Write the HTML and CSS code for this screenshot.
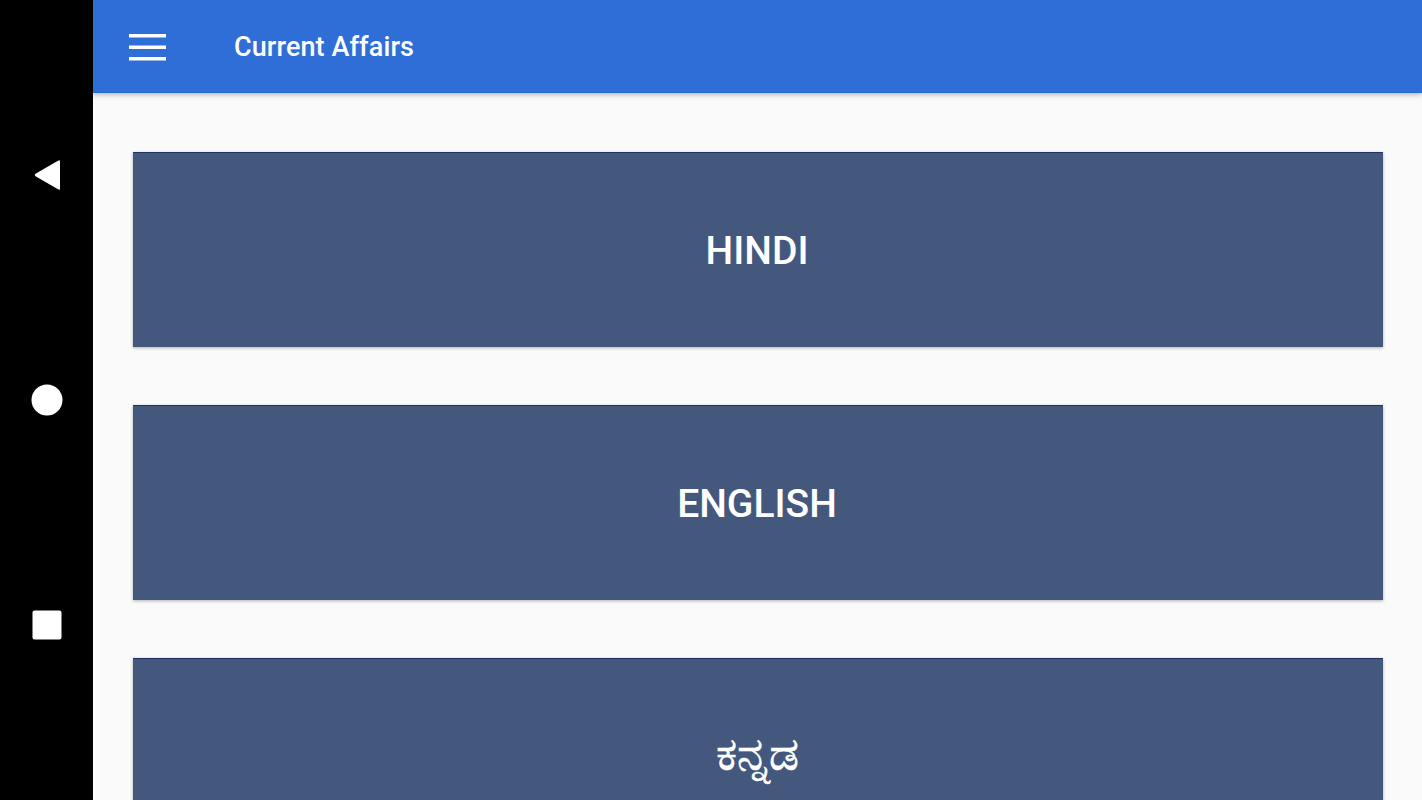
FILE: index.html
```html
<!DOCTYPE html>
<html>
<head>
<meta charset="utf-8">
<link rel="stylesheet" href="styles.css">
</head>
<body>
<div class="screen">
  <nav class="navbar">
    <svg class="nav-icon" width="30" height="32" viewBox="0 0 30 32"><path d="M27 2.5 L27 29.5 Q27 31.5 25 30.3 L2.5 17.3 Q0.8 16 2.5 14.7 L25 1.7 Q27 0.5 27 2.5 Z" fill="#fff"/></svg>
    <svg class="nav-icon" width="32" height="32" viewBox="0 0 32 32"><circle cx="16" cy="16" r="15.5" fill="#fff"/></svg>
    <svg class="nav-icon" width="30" height="30" viewBox="0 0 30 30"><rect x="0.5" y="0.5" width="29" height="29" rx="2" fill="#fff"/></svg>
  </nav>
  <main class="app">
    <header class="appbar">
      <svg class="menu" width="37" height="27" viewBox="0 0 37 27"><rect x="0" y="0" width="37" height="3.5" fill="#fff"/><rect x="0" y="11.5" width="37" height="3.5" fill="#fff"/><rect x="0" y="23" width="37" height="3.5" fill="#fff"/></svg>
      <h1 class="title">Current Affairs</h1>
    </header>
    <section class="list">
      <div class="card">HINDI</div>
      <div class="card">ENGLISH</div>
      <div class="card kn">ಕನ್ನಡ</div>
    </section>
  </main>
</div>
</body>
</html>
```
FILE: styles.css
```css
html, body {
  margin: 0;
  padding: 0;
  width: 1422px;
  height: 800px;
  overflow: hidden;
  font-family: Roboto, "Noto Sans", "Liberation Sans", sans-serif;
}
.screen {
  display: flex;
  width: 1422px;
  height: 800px;
}
.navbar {
  width: 93px;
  flex: none;
  background: #000;
  display: flex;
  flex-direction: column;
  align-items: center;
  padding-top: 159px;
  box-sizing: border-box;
}
.nav-icon { display: block; }
.navbar .nav-icon:nth-child(1) { margin-left: 2px; }
.navbar .nav-icon:nth-child(2) { margin-top: 193px; }
.navbar .nav-icon:nth-child(3) { margin-top: 194px; }
.app {
  flex: 1;
  background: #fafafa;
  display: flex;
  flex-direction: column;
  overflow: hidden;
}
.appbar {
  height: 93px;
  flex: none;
  background: #2f6ed6;
  border-bottom: 1px solid #1f68e0;
  box-shadow: 0 2px 5px rgba(0,0,0,0.25);
  display: flex;
  align-items: center;
  padding-left: 36px;
  padding-top: 2px;
  box-sizing: border-box;
  position: relative;
  z-index: 1;
}
.menu { display: block; }
.title {
  margin: 0 0 0 68px;
  color: #fff;
  font-size: 27px;
  font-weight: 500;
  letter-spacing: 0.1px;
}
.list {
  display: flex;
  flex-direction: column;
  gap: 58px;
  padding: 59px 39px 0 40px;
}
.card {
  height: 195px;
  flex: none;
  background: #44587e;
  border-top: 1px solid #1d3364;
  box-sizing: border-box;
  box-shadow: 0 1px 3px rgba(0,0,0,0.3);
  color: #fff;
  font-size: 39px;
  font-weight: 500;
  display: flex;
  align-items: center;
  justify-content: center;
  padding-right: 2px;
  padding-top: 2px;
}
.card.kn {
  font-weight: 400;
  font-size: 47px;
  padding-top: 0;
  padding-bottom: 4px;
  -webkit-text-stroke: 0.7px #fff;
}
```
